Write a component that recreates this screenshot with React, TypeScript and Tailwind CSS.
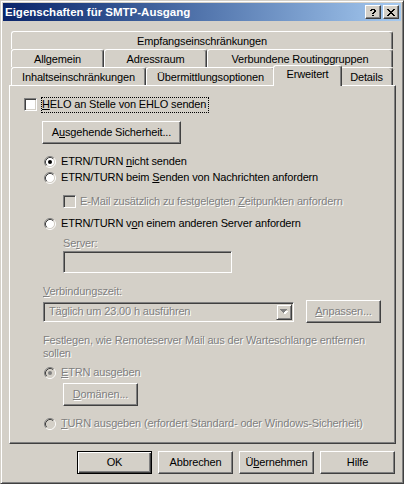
import React from "react";

const dis = "text-[#808080] [text-shadow:1px_1px_0_#ffffff]";

function Checkbox({ disabled = false }: { disabled?: boolean }) {
  return (
    <span
      className={`inline-block shrink-0 w-[13px] h-[13px] border border-t-[#808080] border-l-[#808080] border-r-white border-b-white shadow-[inset_1px_1px_0_#404040,inset_-1px_-1px_0_#d4d0c8] ${
        disabled ? "bg-[#d4d0c8]" : "bg-white"
      }`}
    />
  );
}

function Radio({ checked = false, disabled = false }: { checked?: boolean; disabled?: boolean }) {
  return (
    <svg width="12" height="12" viewBox="0 0 12 12" className="shrink-0">
      <circle cx="6" cy="6" r="4.5" fill={disabled ? "#d4d0c8" : "#ffffff"} />
      <path d="M2.11 9.89 A5.5 5.5 0 0 1 9.89 2.11" stroke="#808080" fill="none" />
      <path d="M9.89 2.11 A5.5 5.5 0 0 1 2.11 9.89" stroke="#ffffff" fill="none" />
      <path d="M2.82 9.18 A4.5 4.5 0 0 1 9.18 2.82" stroke="#404040" fill="none" />
      <path d="M9.18 2.82 A4.5 4.5 0 0 1 2.82 9.18" stroke="#d4d0c8" fill="none" />
      {checked && <circle cx="6" cy="6" r="2" fill={disabled ? "#808080" : "#000000"} />}
    </svg>
  );
}

function Btn({
  children,
  w = "w-[75px]",
  def = false,
  disabled = false,
}: {
  children: React.ReactNode;
  w?: string;
  def?: boolean;
  disabled?: boolean;
}) {
  const frame = def
    ? "border border-black shadow-[inset_1px_1px_0_#ffffff,inset_-1px_-1px_0_#404040,inset_-2px_-2px_0_#808080]"
    : "border border-t-white border-l-white border-r-[#404040] border-b-[#404040] shadow-[inset_-1px_-1px_0_#808080]";
  return (
    <div
      className={`${w} h-[23px] shrink-0 bg-[#d4d0c8] ${frame} flex items-center justify-center text-[11px] leading-[13px] ${
        disabled ? dis : "text-black"
      }`}
    >
      <span>{children}</span>
    </div>
  );
}

function Tab({
  children,
  w,
  selected = false,
}: {
  children: React.ReactNode;
  w: string;
  selected?: boolean;
}) {
  return (
    <div
      className={`${w} shrink-0 bg-[#d4d0c8] border-t border-l border-r border-t-white border-l-white border-r-[#404040] rounded-t-[3px] shadow-[inset_-1px_0_0_#808080] flex justify-center text-[11px] leading-[13px] text-black ${
        selected ? "relative z-10 -mx-[2px] -mt-[2px] h-[21px] pt-[2px]" : "h-[18px] pt-[3px]"
      }`}
    >
      <span>{children}</span>
    </div>
  );
}

function TitleBtn({ children }: { children: React.ReactNode }) {
  return (
    <div className="w-[16px] h-[14px] bg-[#d4d0c8] border border-t-white border-l-white border-r-[#404040] border-b-[#404040] shadow-[inset_-1px_-1px_0_#808080] flex items-center justify-center">
      {children}
    </div>
  );
}

export default function App() {
  return (
    <div className="w-[404px] h-[484px] bg-[#d4d0c8] border border-t-[#d4d0c8] border-l-[#d4d0c8] border-r-[#404040] border-b-[#404040] shadow-[inset_1px_1px_0_#ffffff,inset_-1px_-1px_0_#808080] p-[2px] font-['Liberation_Sans',Arial,sans-serif] text-[11px] text-black overflow-hidden">
      {/* title bar */}
      <div className="h-[18px] flex items-center justify-between bg-gradient-to-r from-[#0a246a] to-[#a6caf0] pl-[2px] pr-[2px]">
        <span className="text-white font-bold text-[11.5px] leading-[14px] whitespace-nowrap">
          Eigenschaften für SMTP-Ausgang
        </span>
        <div className="flex gap-[2px]">
          <TitleBtn>
            <svg width="6" height="7" viewBox="0 0 6 7" shapeRendering="crispEdges">
              <path d="M1 0h4v1h-4z M0 1h2v1h-2z M4 1h2v2h-2z M3 3h2v1h-2z M2 4h2v1h-2z M2 6h2v1h-2z" fill="#000" />
            </svg>
          </TitleBtn>
          <TitleBtn>
            <svg width="8" height="7" viewBox="0 0 8 7" shapeRendering="crispEdges">
              <path d="M0 0h2v1h-2z M6 0h2v1h-2z M1 1h2v1h-2z M5 1h2v1h-2z M2 2h4v1h-4z M3 3h2v1h-2z M2 4h4v1h-4z M1 5h2v1h-2z M5 5h2v1h-2z M0 6h2v1h-2z M6 6h2v1h-2z" fill="#000" />
            </svg>
          </TitleBtn>
        </div>
      </div>

      {/* body */}
      <div className="pl-[6px] pt-[10px] tracking-[-0.15px]">
        {/* tabs */}
        <div className="ml-[2px] w-[382px] flex flex-col">
          <div className="flex">
            <Tab w="w-[382px]">Empfangseinschränkungen</Tab>
          </div>
          <div className="flex">
            <Tab w="w-[93px]">Allgemein</Tab>
            <Tab w="w-[103px]">Adressraum</Tab>
            <Tab w="w-[186px]">Verbundene Routinggruppen</Tab>
          </div>
          <div className="flex h-[18px] items-start">
            <Tab w="w-[135px]">Inhaltseinschränkungen</Tab>
            <Tab w="w-[129px]">Übermittlungsoptionen</Tab>
            <Tab w="w-[69px]" selected>
              Erweitert
            </Tab>
            <Tab w="w-[53px]">Details</Tab>
          </div>
        </div>

        {/* panel */}
        <div className="w-[387px] h-[359px] border border-t-white border-l-white border-r-[#404040] border-b-[#404040] shadow-[inset_-1px_-1px_0_#808080] flex flex-col">
          {/* HELO checkbox */}
          <div className="mt-[12px] ml-[14px] h-[13px] flex items-center">
            <Checkbox />
            <span className="ml-[4px] h-[16px] pl-[1px] pr-[3px] flex items-center outline outline-1 outline-dotted outline-black -outline-offset-1 leading-[13px] whitespace-nowrap">
              <span>
                <u>H</u>ELO an Stelle von EHLO senden
              </span>
            </span>
          </div>

          <div className="mt-[10px] ml-[32px] flex">
            <Btn w="w-[139px]">
              A<u>u</u>sgehende Sicherheit...
            </Btn>
          </div>

          <div className="mt-[11px] ml-[34px] h-[13px] flex items-center gap-[5px] whitespace-nowrap leading-[13px]">
            <Radio checked />
            <span>
              ETRN/TURN <u>n</u>icht senden
            </span>
          </div>
          <div className="mt-[3px] ml-[34px] h-[13px] flex items-center gap-[5px] whitespace-nowrap leading-[13px]">
            <Radio />
            <span>
              ETRN/TURN beim <u>S</u>enden von Nachrichten anfordern
            </span>
          </div>
          <div className="mt-[11px] ml-[53px] h-[13px] flex items-center gap-[4px] whitespace-nowrap leading-[13px]">
            <Checkbox disabled />
            <span className={dis}>
              E-Mail zusätzlich zu festgelegten <u>Z</u>eitpunkten anfordern
            </span>
          </div>
          <div className="mt-[9px] ml-[34px] h-[13px] flex items-center gap-[5px] whitespace-nowrap leading-[13px]">
            <Radio />
            <span>
              ETRN/TURN v<u>o</u>n einem anderen Server anfordern
            </span>
          </div>

          <div className={`mt-[7px] ml-[53px] h-[13px] leading-[13px] ${dis}`}>
            Se<u>r</u>ver:
          </div>
          <div className="mt-[1px] ml-[53px] w-[169px] h-[22px] bg-[#d4d0c8] border border-t-[#808080] border-l-[#808080] border-r-white border-b-white shadow-[inset_1px_1px_0_#404040,inset_-1px_-1px_0_#d4d0c8]" />

          <div className={`mt-[12px] ml-[33px] h-[13px] leading-[13px] ${dis}`}>
            <u>V</u>erbindungszeit:
          </div>
          <div className="mt-[2px] ml-[33px] h-[23px] flex items-center gap-[12px]">
            <div className="w-[251px] h-[20px] bg-[#d4d0c8] border border-t-[#808080] border-l-[#808080] border-r-white border-b-white shadow-[inset_1px_1px_0_#404040,inset_-1px_-1px_0_#d4d0c8] p-[1px] flex items-center">
              <span className={`flex-1 pl-[4px] leading-[13px] whitespace-nowrap ${dis}`}>
                Täglich um 23.00 h ausführen
              </span>
              <div className="w-[16px] h-[16px] bg-[#d4d0c8] border border-t-[#d4d0c8] border-l-[#d4d0c8] border-r-[#404040] border-b-[#404040] shadow-[inset_1px_1px_0_#ffffff,inset_-1px_-1px_0_#808080] flex items-center justify-center">
                <svg width="8" height="5" viewBox="0 0 8 5" shapeRendering="crispEdges">
                  <path d="M1 1h6v1h-6z M2 2h4v1h-4z M3 3h2v1h-2z" fill="#ffffff" transform="translate(1,1)" />
                  <path d="M0 0h7v1h-7z M1 1h5v1h-5z M2 2h3v1h-3z M3 3h1v1h-1z" fill="#808080" />
                </svg>
              </div>
            </div>
            <Btn disabled>
              <u>A</u>npassen...
            </Btn>
          </div>

          <div className={`mt-[11px] ml-[33px] leading-[13px] whitespace-nowrap ${dis}`}>
            Festlegen, wie Remoteserver Mail aus der Warteschlange entfernen
            <br />
            sollen
          </div>

          <div className="mt-[6px] ml-[34px] h-[13px] flex items-center gap-[5px] whitespace-nowrap leading-[13px]">
            <Radio checked disabled />
            <span className={dis}>
              <u>E</u>TRN ausgeben
            </span>
          </div>
          <div className="mt-[4px] ml-[53px] flex">
            <Btn disabled>
              <u>D</u>omänen...
            </Btn>
          </div>
          <div className="mt-[11px] ml-[34px] h-[13px] flex items-center gap-[5px] whitespace-nowrap leading-[13px]">
            <Radio disabled />
            <span className={dis}>
              <u>T</u>URN ausgeben (erfordert Standard- oder Windows-Sicherheit)
            </span>
          </div>
        </div>

        {/* bottom buttons */}
        <div className="mt-[7px] w-[386px] flex justify-end gap-[6px]">
          <Btn def>OK</Btn>
          <Btn>Abbrechen</Btn>
          <Btn>
            Ü<u>b</u>ernehmen
          </Btn>
          <Btn>Hilfe</Btn>
        </div>
      </div>
    </div>
  );
}
